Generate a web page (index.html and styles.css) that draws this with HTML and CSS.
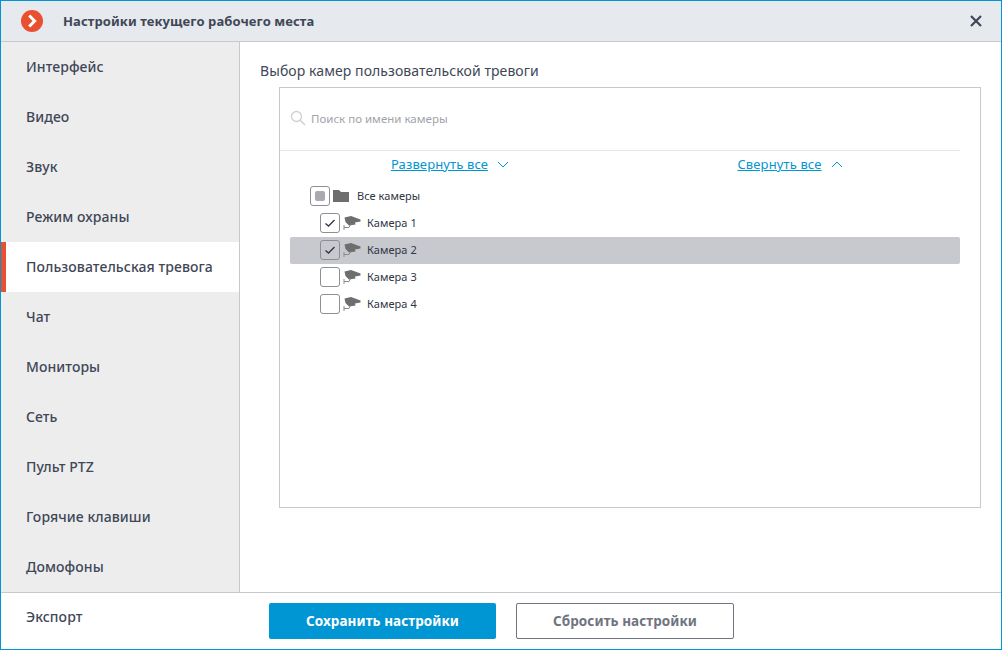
FILE: index.html

```html
<!DOCTYPE html>
<html lang="ru">
<head>
  <meta charset="UTF-8" />
  <title>Настройки текущего рабочего места</title>
  <link rel="stylesheet" href="styles.css">
</head>
<body>
  <div class="window">
    <header class="titlebar">
      <svg class="logo" width="22" height="22" viewBox="0 0 22 22">
        <circle cx="11" cy="11" r="11" fill="#e8502f"/>
        <path d="M8.2 5.5 L13.6 11 L8.2 16.5" fill="none" stroke="#fff" stroke-width="3"/>
      </svg>
      <span class="title">Настройки текущего рабочего места</span>
      <svg class="close" width="12" height="12" viewBox="0 0 12 12">
        <path d="M1 1 L11 11 M11 1 L1 11" stroke="#3f4757" stroke-width="2.2"/>
      </svg>
    </header>

    <div class="middle">
      <nav class="sidebar">
        <a class="nav-item">Интерфейс</a>
        <a class="nav-item">Видео</a>
        <a class="nav-item">Звук</a>
        <a class="nav-item">Режим охраны</a>
        <a class="nav-item active">Пользовательская тревога</a>
        <a class="nav-item">Чат</a>
        <a class="nav-item">Мониторы</a>
        <a class="nav-item">Сеть</a>
        <a class="nav-item">Пульт PTZ</a>
        <a class="nav-item">Горячие клавиши</a>
        <a class="nav-item">Домофоны</a>
      </nav>

      <main class="content">
        <h2 class="heading">Выбор камер пользовательской тревоги</h2>
        <section class="panel">
          <div class="search">
            <svg width="16" height="16" viewBox="0 0 16 16">
              <circle cx="6.5" cy="6.5" r="5" fill="none" stroke="#cfd0d3" stroke-width="1.3"/>
              <path d="M10.2 10.2 L15 15" stroke="#cfd0d3" stroke-width="1.5"/>
            </svg>
            <span>Поиск по имени камеры</span>
          </div>
          <div class="links">
            <div class="link-cell">
              <a class="link">Развернуть все</a>
              <svg width="12" height="7" viewBox="0 0 12 7"><path d="M1 1 L6 6 L11 1" fill="none" stroke="#0095d3" stroke-width="1"/></svg>
            </div>
            <div class="link-cell">
              <a class="link">Свернуть все</a>
              <svg width="12" height="7" viewBox="0 0 12 7"><path d="M1 6 L6 1 L11 6" fill="none" stroke="#0095d3" stroke-width="1"/></svg>
            </div>
          </div>
          <ul class="tree">
            <li class="row root">
              <span class="check"><span class="partial"></span></span>
              <svg class="folder" width="16" height="12" viewBox="0 0 16 12"><path d="M0 0 H6 L8 2 H16 V12 H0 Z" fill="#6e6e6e"/></svg>
              <span class="label">Все камеры</span>
            </li>
            <li class="row">
              <span class="check"><svg width="12" height="10" viewBox="0 0 12 10"><path d="M1.5 5.5 L4.5 8 L10.5 2" fill="none" stroke="#2f3644" stroke-width="1.3"/></svg></span>
              <svg class="cam" width="18" height="16" viewBox="0 0 18 16"><path d="M1.5 2.5 L8 1 L17.5 4.5 V6.5 L12 7.5 L12.5 9.5 L6 10.5 L2.5 7 Z" fill="#6e6e6e"/><path d="M1 10 V15 M1 12.5 H6 L7.5 9.5" fill="none" stroke="#8a8a8a" stroke-width="1"/></svg>
              <span class="label">Камера 1</span>
            </li>
            <li class="row selected">
              <span class="check"><svg width="12" height="10" viewBox="0 0 12 10"><path d="M1.5 5.5 L4.5 8 L10.5 2" fill="none" stroke="#2f3644" stroke-width="1.3"/></svg></span>
              <svg class="cam" width="18" height="16" viewBox="0 0 18 16"><path d="M1.5 2.5 L8 1 L17.5 4.5 V6.5 L12 7.5 L12.5 9.5 L6 10.5 L2.5 7 Z" fill="#6e6e6e"/><path d="M1 10 V15 M1 12.5 H6 L7.5 9.5" fill="none" stroke="#8a8a8a" stroke-width="1"/></svg>
              <span class="label">Камера 2</span>
            </li>
            <li class="row">
              <span class="check"></span>
              <svg class="cam" width="18" height="16" viewBox="0 0 18 16"><path d="M1.5 2.5 L8 1 L17.5 4.5 V6.5 L12 7.5 L12.5 9.5 L6 10.5 L2.5 7 Z" fill="#6e6e6e"/><path d="M1 10 V15 M1 12.5 H6 L7.5 9.5" fill="none" stroke="#8a8a8a" stroke-width="1"/></svg>
              <span class="label">Камера 3</span>
            </li>
            <li class="row">
              <span class="check"></span>
              <svg class="cam" width="18" height="16" viewBox="0 0 18 16"><path d="M1.5 2.5 L8 1 L17.5 4.5 V6.5 L12 7.5 L12.5 9.5 L6 10.5 L2.5 7 Z" fill="#6e6e6e"/><path d="M1 10 V15 M1 12.5 H6 L7.5 9.5" fill="none" stroke="#8a8a8a" stroke-width="1"/></svg>
              <span class="label">Камера 4</span>
            </li>
          </ul>
        </section>
      </main>
    </div>

    <footer class="footer">
      <a class="nav-item export">Экспорт</a>
      <div class="buttons">
        <button class="btn primary">Сохранить настройки</button>
        <button class="btn secondary">Сбросить настройки</button>
      </div>
    </footer>
  </div>
</body>
</html>
```

FILE: styles.css

```css
html, body {
  margin: 0;
  padding: 0;
}
body {
  font-family: "Noto Sans", "Open Sans", sans-serif;
  color: #3f4757;
  background: white;
}
.window {
  box-sizing: border-box;
  width: 1002px;
  height: 650px;
  border: 1px solid #0095d3;
  display: flex;
  flex-direction: column;
}
.titlebar {
  flex: none;
  height: 40px;
  background: #e6e9ee;
  border-bottom: 1px solid #c8c9ce;
  display: flex;
  align-items: center;
  padding: 0 19px 0 20px;
}
.title {
  margin-left: 20px;
  font-size: 13px;
  font-weight: 700;
  letter-spacing: 0.09px;
  flex: 1;
}
.middle {
  flex: 1;
  display: flex;
  min-height: 0;
}
.sidebar {
  flex: none;
  width: 238px;
  background: #ededee;
  border-right: 1px solid #c8c9ce;
  display: flex;
  flex-direction: column;
}
.nav-item {
  box-sizing: border-box;
  height: 50px;
  flex: none;
  display: flex;
  align-items: center;
  padding: 0 0 1px 25px;
  font-size: 14px;
  font-weight: 500;
  letter-spacing: 0.08px;
}
.nav-item.active {
  background: white;
  border-left: 5px solid #e8502f;
  padding-left: 20px;
}
.content {
  flex: 1;
  padding: 19px 20px 0 20px;
}
.heading {
  margin: 0 0 6px;
  font-size: 14px;
  font-weight: 400;
  line-height: 20px;
  letter-spacing: 0.08px;
}
.panel {
  margin-left: 19px;
  height: 419px;
  width: 700px;
  border: 1px solid #c8c9ce;
}
.search {
  box-sizing: border-box;
  height: 63px;
  margin-right: 20px;
  padding: 0 0 2px 10px;
  border-bottom: 1px solid #e6e7ec;
  display: flex;
  align-items: center;
  font-size: 11.5px;
  color: #a0a3a9;
  gap: 5px;
}
.links {
  display: grid;
  grid-template-columns: 340px 340px;
  height: 26px;
}
.link-cell {
  display: flex;
  align-items: center;
  justify-content: center;
  gap: 9px;
  font-size: 13px;
  letter-spacing: 0.13px;
  color: #0095d3;
}
.link {
  text-decoration: underline;
}
.tree {
  list-style: none;
  margin: 6px 20px 0 10px;
  padding: 0;
}
.row {
  box-sizing: border-box;
  height: 27px;
  display: flex;
  align-items: center;
  padding: 0 0 1px 30px;
  font-size: 11px;
  letter-spacing: 0.05px;
  color: #2f3644;
  border-radius: 2px;
}
.row.root {
  padding-left: 20px;
}
.row.selected {
  background: #c8c8cf;
}
.label {
  margin-bottom: 2px;
}
.check {
  box-sizing: border-box;
  width: 20px;
  height: 20px;
  border: 1px solid #8e8f93;
  border-radius: 3px;
  display: flex;
  align-items: center;
  justify-content: center;
}
.partial {
  width: 10px;
  height: 10px;
  background: #a9a9ae;
  border-radius: 2px;
}
.folder {
  margin: 0 8px 0 3px;
}
.cam {
  margin: 0 6px 0 3px;
}
.footer {
  flex: none;
  height: 56px;
  border-top: 1px solid #c8c9ce;
  display: flex;
}
.export {
  width: 238px;
  height: 48px;
}
.buttons {
  display: flex;
  gap: 20px;
  padding: 10px 0 0 30px;
}
.btn {
  box-sizing: border-box;
  height: 36px;
  font-family: inherit;
  font-size: 13.5px;
  font-weight: 700;
  letter-spacing: 0.07px;
  border-radius: 2px;
}
.primary {
  width: 227px;
  background: #0095d3;
  color: white;
  border: none;
}
.secondary {
  width: 218px;
  background: white;
  color: #70747f;
  border: 1px solid #70747f;
}
```
